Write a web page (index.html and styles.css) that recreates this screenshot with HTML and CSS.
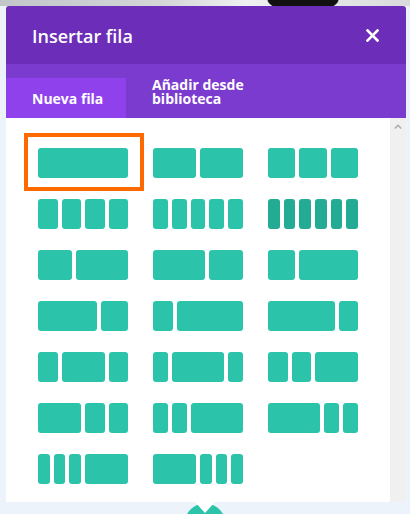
FILE: index.html
```html
<!DOCTYPE html>
<html lang="es">
<head>
<meta charset="utf-8">
<link rel="stylesheet" href="styles.css">
</head>
<body>
<div class="modal">
  <div class="header">
    <h1 class="title">Insertar fila</h1>
    <svg class="close" width="13" height="13" viewBox="0 0 13 13"><path d="M1.5 1.5L11.5 11.5M11.5 1.5L1.5 11.5" stroke="#fff" stroke-width="2.6" stroke-linecap="square"/></svg>
  </div>
  <div class="tabs">
    <div class="tab active">Nueva fila</div>
    <div class="tab">Añadir desde biblioteca</div>
  </div>
  <div class="body">
    <div class="grid">
      <div class="layout selected"><span class="b b60"></span></div>
      <div class="layout"><span class="b b30"></span><span class="b b30"></span></div>
      <div class="layout"><span class="b b20"></span><span class="b b20"></span><span class="b b20"></span></div>

      <div class="layout"><span class="b b15"></span><span class="b b15"></span><span class="b b15"></span><span class="b b15"></span></div>
      <div class="layout"><span class="b b12"></span><span class="b b12"></span><span class="b b12"></span><span class="b b12"></span><span class="b b12"></span></div>
      <div class="layout hover"><span class="b b10"></span><span class="b b10"></span><span class="b b10"></span><span class="b b10"></span><span class="b b10"></span><span class="b b10"></span></div>

      <div class="layout"><span class="b b24"></span><span class="b b36"></span></div>
      <div class="layout"><span class="b b36"></span><span class="b b24"></span></div>
      <div class="layout"><span class="b b20"></span><span class="b b40"></span></div>

      <div class="layout"><span class="b b40"></span><span class="b b20"></span></div>
      <div class="layout"><span class="b b15"></span><span class="b b45"></span></div>
      <div class="layout"><span class="b b45"></span><span class="b b15"></span></div>

      <div class="layout"><span class="b b15"></span><span class="b b30"></span><span class="b b15"></span></div>
      <div class="layout"><span class="b b12"></span><span class="b b36"></span><span class="b b12"></span></div>
      <div class="layout"><span class="b b15"></span><span class="b b15"></span><span class="b b30"></span></div>

      <div class="layout"><span class="b b30"></span><span class="b b15"></span><span class="b b15"></span></div>
      <div class="layout"><span class="b b12"></span><span class="b b12"></span><span class="b b36"></span></div>
      <div class="layout"><span class="b b36"></span><span class="b b12"></span><span class="b b12"></span></div>

      <div class="layout"><span class="b b10"></span><span class="b b10"></span><span class="b b10"></span><span class="b b30"></span></div>
      <div class="layout"><span class="b b30"></span><span class="b b10"></span><span class="b b10"></span><span class="b b10"></span></div>
    </div>
    <div class="scrollbar">
      <svg class="arrow" width="8" height="5" viewBox="0 0 8 5"><path d="M0.8 4.4L4 1.2L7.2 4.4" fill="none" stroke="#a8a8a8" stroke-width="1.4"/></svg>
    </div>
  </div>
</div>
<div class="add-btn"></div>
<div class="pointer"></div>
</body>
</html>
```
FILE: styles.css
```css
html, body {
  margin: 0;
  padding: 0;
}
body {
  width: 410px;
  height: 514px;
  overflow: hidden;
  position: relative;
  padding: 6px 4px 0 6px;
  box-sizing: border-box;
  font-family: "Open Sans", "Noto Sans", sans-serif;
  background:
    radial-gradient(ellipse 36px 12px at 303px 0, #111 0, #111 96%, transparent 100%) no-repeat,
    linear-gradient(to right, #c2c6c9 0, #d4d6d8 40%, #eef0f1 60%, #d8dadb 100%) 0 0 / 410px 6px no-repeat,
    #edf3fb;
}
.modal {
  width: 400px;
  position: relative;
  z-index: 1;
  border-radius: 3px 3px 0 0;
  overflow: hidden;
}
.header {
  height: 58px;
  background: #6c2eb9;
  display: flex;
  align-items: center;
  justify-content: space-between;
  padding: 0 27px 0 26px;
}
.title {
  margin: 0;
  color: #fff;
  font-size: 18px;
  font-weight: 600;
  line-height: 1;
  padding-top: 2px;
}
.close {
  display: block;
}
.tabs {
  height: 54px;
  background: #7c3bcf;
  display: flex;
  align-items: flex-end;
}
.tab {
  color: #fff;
  font-size: 14px;
  font-weight: 700;
  line-height: 14px;
  padding: 0 26px 12px 26px;
  width: 102px;
}
.tab.active {
  width: 94px;
  padding: 0 0 12px 26px;
  height: 28px;
  white-space: nowrap;
  background: #8f42ec;
  display: flex;
  align-items: flex-end;
}
.body {
  display: flex;
  height: 384px;
  background: #fff;
}
.grid {
  flex: 1;
  display: grid;
  grid-template-columns: repeat(3, 90px);
  grid-auto-rows: 30px;
  column-gap: 25px;
  row-gap: 21px;
  padding: 30px 0 0 32px;
  align-content: start;
}
.layout {
  display: flex;
  gap: 4px;
  position: relative;
}
.layout.selected::after {
  content: "";
  position: absolute;
  left: -14px;
  right: -16px;
  top: -15px;
  bottom: -13px;
  border: 4px solid #ff6a00;
}
.b {
  display: block;
  height: 30px;
  background: #2bc4aa;
  border-radius: 3px;
  flex: none;
}
.hover .b {
  background: #23ab93;
}
.b10 { width: calc(94px * 10 / 60 - 4px); }
.b12 { width: calc(94px * 12 / 60 - 4px); }
.b15 { width: calc(94px * 15 / 60 - 4px); }
.b20 { width: calc(94px * 20 / 60 - 4px); }
.b24 { width: calc(94px * 24 / 60 - 4px); }
.b30 { width: calc(94px * 30 / 60 - 4px); }
.b36 { width: calc(94px * 36 / 60 - 4px); }
.b40 { width: calc(94px * 40 / 60 - 4px); }
.b45 { width: calc(94px * 45 / 60 - 4px); }
.b60 { width: 90px; }
.scrollbar {
  width: 16px;
  background: #f0f0f0;
  display: flex;
  justify-content: center;
  align-items: flex-start;
  padding-top: 6px;
  box-sizing: border-box;
}
.arrow {
  display: block;
}
.add-btn {
  position: absolute;
  left: 184px;
  top: 503px;
  width: 42px;
  height: 11px;
  background: radial-gradient(circle 21px at 21px 21px, #2bc4aa 0, #2bc4aa 20px, transparent 21px);
}
.pointer {
  position: absolute;
  left: 195px;
  top: 502px;
  width: 0;
  height: 0;
  border-left: 10px solid transparent;
  border-right: 10px solid transparent;
  border-top: 11px solid #fff;
  z-index: 2;
}
```
